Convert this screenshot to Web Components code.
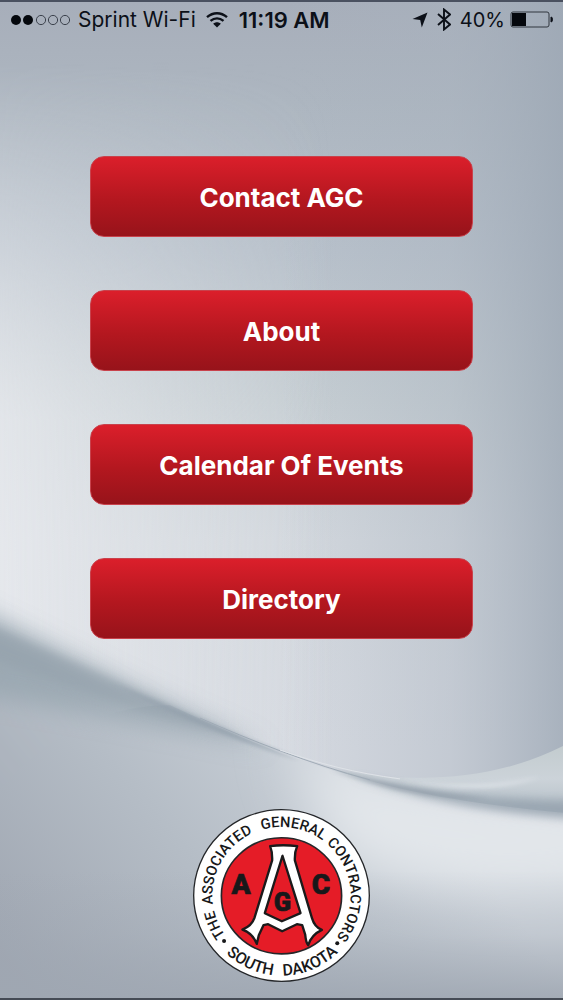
<!DOCTYPE html>
<html lang="en">
<head>
<meta charset="utf-8">
<meta name="viewport" content="width=device-width, initial-scale=1">
<title>AGC South Dakota</title>
<style>
body { margin: 0; font-family: Inter, "Liberation Sans", sans-serif; color: #0c1018; }
</style>
</head>
<body>
<agc-app></agc-app>

<template id="app">
<style>
:host { display: flex; flex-direction: column; box-sizing: border-box; min-height: 100vh; position: relative; isolation: isolate; border-top: 2px solid #4a5160; border-bottom: 2px solid #454b55; }
nav { display: flex; flex-direction: column; gap: 53px; width: 68%; margin: 0 auto; padding: 119px 0 40px; }
footer { display: flex; justify-content: center; margin-top: auto; padding-bottom: 16px; }
</style>
<silk-backdrop></silk-backdrop>
<status-bar>
  <signal-dots slot="left"></signal-dots>
  <span slot="left">Sprint Wi-Fi</span>
  <span slot="time">11:19 AM</span>
  <span slot="right">40%</span>
</status-bar>
<nav aria-label="Main">
  <menu-button>Contact AGC</menu-button>
  <menu-button>About</menu-button>
  <menu-button>Calendar Of Events</menu-button>
  <menu-button>Directory</menu-button>
</nav>
<footer><agc-seal></agc-seal></footer>
</template>

<template id="backdrop">
<style>
:host { display: block; position: absolute; inset: 0; z-index: -1; overflow: hidden; }
svg { display: block; width: 100%; height: 100%; }
</style>
<svg viewBox="0 0 563 1000" preserveAspectRatio="none" aria-hidden="true">
  <defs>
    <linearGradient id="sky" x1="0" y1="0" x2="0" y2="1">
      <stop offset="0" stop-color="#a7aeba"/><stop offset=".1" stop-color="#adb6c0"/><stop offset=".25" stop-color="#b8c1cb"/><stop offset=".4" stop-color="#c6ced3"/><stop offset=".54" stop-color="#d3d8de"/><stop offset=".75" stop-color="#d6dae1"/>
    </linearGradient>
    <linearGradient id="left" x1="0" y1="0" x2="1" y2="0">
      <stop offset="0" stop-color="#e9ebef"/><stop offset=".6" stop-color="#e4e7ea" stop-opacity="0"/>
    </linearGradient>
    <linearGradient id="leftfade" x1="0" y1="0" x2="0" y2="1">
      <stop offset=".06" stop-color="#000"/><stop offset=".2" stop-color="#555"/><stop offset=".42" stop-color="#ccc"/><stop offset="1" stop-color="#ddd"/>
    </linearGradient>
    <mask id="leftmask"><rect width="563" height="1000" fill="url(#leftfade)"/></mask>
    <linearGradient id="side" x1="0" y1="0" x2="1" y2="0">
      <stop offset=".5" stop-color="#a8b2be" stop-opacity="0"/><stop offset=".8" stop-color="#a8b2be" stop-opacity=".4"/><stop offset="1" stop-color="#9da8b5" stop-opacity=".8"/>
    </linearGradient>
    <linearGradient id="low" gradientUnits="userSpaceOnUse" x1="0" y1="960" x2="330" y2="690">
      <stop offset="0" stop-color="#9fa6b1"/><stop offset=".5" stop-color="#b5bdc6"/><stop offset="1" stop-color="#d0d6dd"/>
    </linearGradient>
    <linearGradient id="base" x1="0" y1="0" x2="0" y2="1">
      <stop offset=".2" stop-color="#9fa7b2" stop-opacity="0"/><stop offset=".6" stop-color="#9fa7b2" stop-opacity=".3"/><stop offset="1" stop-color="#9fa7b2" stop-opacity=".9"/>
    </linearGradient>
    <linearGradient id="band" gradientUnits="userSpaceOnUse" x1="0" y1="748" x2="0" y2="812">
      <stop offset="0" stop-color="#c3cccf"/><stop offset=".5" stop-color="#ccd3d9"/><stop offset="1" stop-color="#b4bfc7"/>
    </linearGradient>
    <clipPath id="under"><path d="M0 600C85 655 190 716 280 754C350 780 440 800 563 812V1000H0Z"/></clipPath>
    <filter id="b2" x="-20%" y="-40%" width="140%" height="180%"><feGaussianBlur stdDeviation="2"/></filter>
    <filter id="b5" x="-20%" y="-40%" width="140%" height="180%"><feGaussianBlur stdDeviation="5"/></filter>
    <filter id="b12" x="-30%" y="-50%" width="160%" height="200%"><feGaussianBlur stdDeviation="12"/></filter>
    <filter id="b30" x="-50%" y="-50%" width="200%" height="200%"><feGaussianBlur stdDeviation="28"/></filter>
  </defs>
  <rect width="563" height="1000" fill="url(#sky)"/>
  <rect width="563" height="820" fill="url(#left)" mask="url(#leftmask)"/>
  <rect width="563" height="820" fill="url(#side)"/>
  <path d="M-80 594C40 650 130 704 250 770L600 900V1100H-80Z" fill="url(#low)" filter="url(#b12)"/>
  <path d="M0 790C60 720 130 705 170 706C205 722 240 738 280 754C350 780 440 799 563 812V1000H0Z" fill="url(#low)"/>
  <g clip-path="url(#under)"><path d="M290 730C400 790 500 790 640 800V880C540 900 400 900 330 850Z" fill="#e3e7eb" filter="url(#b30)"/></g>
  <rect y="840" width="563" height="160" fill="url(#base)"/>
  <path d="M-60 590C60 650 160 702 270 749C180 733 90 712 -60 690Z" fill="#93a2ac" opacity=".7" filter="url(#b12)"/>
  <path d="M-30 618C60 655 160 703 250 743C180 726 90 694 -30 652Z" fill="#94a1ac" opacity=".65" filter="url(#b5)"/>
  <path d="M110 683C180 712 240 737 300 761C240 743 180 719 110 683Z" fill="#919eaa" opacity=".9" filter="url(#b2)"/>
  <path d="M335 771C410 784 490 784 563 747V814C480 806 400 794 335 771Z" fill="url(#band)"/>
  <path d="M400 781C440 786 490 788 540 778C500 794 440 792 400 781Z" fill="#dfe4e9" opacity=".8" filter="url(#b2)"/>
  <path d="M350 776C420 793 490 802 600 802V822C490 815 420 801 350 776Z" fill="#94a1ad" opacity=".85" filter="url(#b5)"/>
  <path d="M330 770C390 785 430 795 490 800C440 801 390 793 330 770Z" fill="#8e9aa6" opacity=".8" filter="url(#b2)"/>
  <path d="M200 719C250 741 310 765 370 781" fill="none" stroke="#a0abb6" stroke-width="1"/>
  <path d="M280 751C320 765 355 774 400 780" fill="none" stroke="#dfe3e8" stroke-width="1"/>
</svg>
</template>

<template id="status">
<style>
:host { display: grid; grid-template-columns: 1fr auto; align-items: center; height: 35px; padding: 0 10px 0 11px; font-size: 21px; line-height: 24px; }
.group { display: flex; align-items: center; gap: 7px; white-space: nowrap; }
.right { gap: 5px; font-size: 20px; }
.time { font-weight: 600; font-size: 22px; margin-left: 4px; }
svg { display: block; flex: none; }
.wifi { margin-left: 3px; }
.blue { margin: 0 4px; }
</style>
<div class="group">
  <slot name="left"></slot>
  <svg class="wifi" width="22" height="16" viewBox="0 0 22 16" aria-label="Wi-Fi" role="img"><g fill="none" stroke="#0c1018" stroke-width="2.4"><path d="M1 5.2C7 -.1 15 -.1 21 5.2"/><path d="M4.500 8.900C8.500 5.500 13.500 5.500 17.500 8.900"/></g><path d="M7.200 11.700C9.400 9.700 12.600 9.700 14.800 11.700L11 15.500Z" fill="#0c1018"/></svg>
  <span class="time"><slot name="time"></slot></span>
</div>
<div class="group right">
  <svg width="16" height="16" viewBox="0 0 16 16" aria-label="Location" role="img"><path d="M15.500 .5L9.800 15.500L8.200 8L.5 6.900Z" fill="#0c1018"/></svg>
  <svg class="blue" width="14" height="23" viewBox="0 0 14 23" aria-label="Bluetooth" role="img"><path d="M1 6L13 16.500L7 21.500V1.500L13 6.500L1 17" fill="none" stroke="#0c1018" stroke-width="1.900"/></svg>
  <slot name="right"></slot>
  <svg width="43" height="18" viewBox="0 0 43 18" aria-label="Battery" role="img"><rect x="1" y="1" width="38" height="15" rx="2" fill="none" stroke="#30363e"/><path d="M2 2H16V15H2Z" fill="#05080d"/><path d="M41 6C43 6 43 11 41 11Z" fill="#0c1018" stroke="#0c1018"/></svg>
</div>
</template>

<template id="dots">
<style>
:host { display: block; }
svg { display: block; }
</style>
<svg width="60" height="12" viewBox="0 0 60 12" aria-label="Signal" role="img"><g fill="#05080d"><circle cx="5" cy="6" r="5"/><circle cx="17" cy="6" r="5"/></g><g fill="none" stroke="#3c424d"><circle cx="30" cy="6" r="4.600"/><circle cx="42" cy="6" r="4.600"/><circle cx="54" cy="6" r="4.600"/></g></svg>
</template>

<template id="button">
<style>
:host { display: block; }
button { display: block; width: 100%; box-sizing: border-box; margin: 0; padding: 25px 16px 23px; border: 1px solid #c8424c; border-radius: 14px; background: linear-gradient(#dc1f2b, #b3171f 55%, #96131a) border-box; color: #fff; font: 700 26px/31px Inter, "Liberation Sans", sans-serif; cursor: pointer; }
</style>
<button type="button"><slot></slot></button>
</template>

<template id="seal">
<style>
:host { display: block; }
svg { display: block; width: 177px; height: auto; }
text { text-anchor: middle; fill: #17181a; font-family: Roboto, "Liberation Sans", sans-serif; }
.ring { font-weight: 500; font-size: 44px; }
.foot { font-weight: 500; font-size: 48px; }
.letter { font-weight: 900; font-size: 84px; stroke: #17181a; stroke-width: 2; }
.inner { font-size: 76px; }
</style>
<svg viewBox="24 26 530 518" role="img" aria-label="The Associated General Contractors, South Dakota">
  <defs>
    <path id="top" pathLength="360" d="M289 490A207 205 0 0 1 289 80A207 205 0 0 1 289 490"/>
    <path id="bottom" pathLength="360" d="M289 45A240 240 0 0 0 289 525A240 240 0 0 0 289 45"/>
  </defs>
  <ellipse cx="289" cy="285" rx="263" ry="257" fill="#fff" stroke="#242629" stroke-width="4"/>
  <ellipse cx="289" cy="286" rx="180" ry="174" fill="#e51c27" stroke="#242629" stroke-width="5"/>
  <path d="M255 137Q294 132 336 137Q328 155 329 180L380 352Q388 380 410 388Q378 403 369 434Q362 425 360 402L351 374L335 371L291 392L249 371L235 374L221 404L215 430Q203 398 172 387Q200 376 208 352L261 180Q262 155 255 137Z" fill="#fff" stroke="#1b1a1b" stroke-width="7" stroke-linejoin="round"/>
  <path d="M292 166L239 338L290 362L346 338Z" fill="#e51c27" stroke="#1b1a1b" stroke-width="7" stroke-linejoin="round"/>
  <text class="letter" x="168" y="280">A</text><text class="letter inner" x="292" y="331">G</text><text class="letter" x="407" y="280">C</text>
  <text class="ring"><textPath href="#top" startOffset="66">THE</textPath></text>
  <text class="ring"><textPath href="#top" startOffset="119">ASSOCIATED</textPath></text>
  <text class="ring"><textPath href="#top" startOffset="190">GENERAL</textPath></text>
  <text class="ring"><textPath href="#top" startOffset="264">CONTRACTORS</textPath></text>
  <text class="foot"><textPath href="#bottom" startOffset="155">SOUTH</textPath></text>
  <text class="foot"><textPath href="#bottom" startOffset="203">DAKOTA</textPath></text>
  <circle cx="117" cy="421" r="6" fill="#17181a"/><circle cx="456" cy="428" r="6" fill="#17181a"/>
</svg>
</template>

<script>
const define = (name, templateId) => customElements.define(name, class extends HTMLElement {
  constructor() {
    super();
    this.attachShadow({ mode: "open" }).append(document.getElementById(templateId).content.cloneNode(true));
  }
});
define("silk-backdrop", "backdrop");
define("signal-dots", "dots");
define("status-bar", "status");
define("menu-button", "button");
define("agc-seal", "seal");
define("agc-app", "app");
</script>
</body>
</html>
